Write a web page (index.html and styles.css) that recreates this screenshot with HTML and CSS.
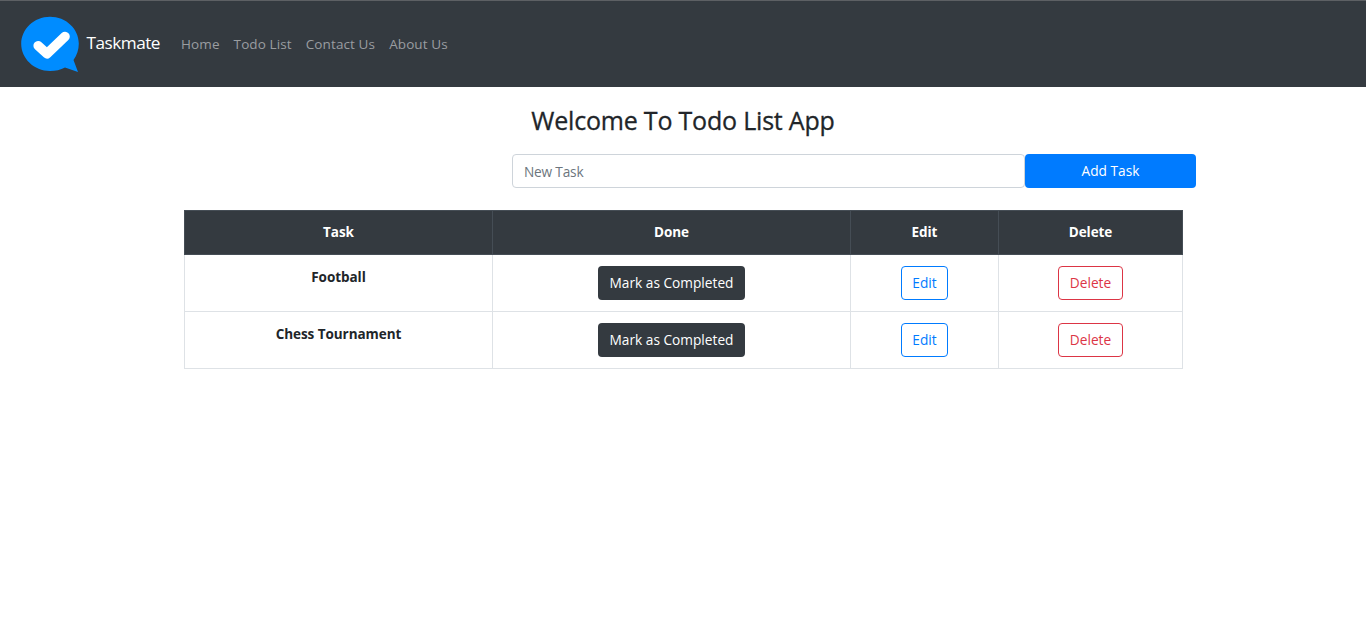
FILE: index.html
```html
<!DOCTYPE html>
<html lang="en">
<head>
<meta charset="utf-8">
<title>Taskmate</title>
<link rel="stylesheet" href="styles.css">
</head>
<body>
<nav class="navbar">
  <a class="brand" href="#">
    <svg class="logo" width="60" height="58" viewBox="0 0 60 58" aria-hidden="true">
      <path fill="#008cff" d="M30 1.700C46 1.700 58.800 13.800 58.800 28.500C58.800 34.500 57 40 53.500 45L58 57L45 52.500C40.500 55 35.500 56 30 56C14 56 1.200 43.500 1.200 28.800S14 1.700 30 1.700Z"/>
      <path fill="none" stroke="#fff" stroke-width="9.600" stroke-linecap="round" stroke-linejoin="round" d="M18.200 30.800L27 38.700L45 21.600"/>
    </svg>
    <span class="brand-name">Taskmate</span>
  </a>
  <div class="links">
    <a href="#">Home</a>
    <a href="#">Todo List</a>
    <a href="#">Contact Us</a>
    <a href="#">About Us</a>
  </div>
</nav>
<main>
  <h1 class="title">Welcome To Todo List App</h1>
  <form class="task-form">
    <input class="task-input" type="text" placeholder="New Task">
    <button class="btn btn-add" type="button">Add Task</button>
  </form>
  <table class="tasks">
    <colgroup><col class="col-task"><col class="col-done"><col class="col-edit"><col class="col-delete"></colgroup>
    <thead>
      <tr><th>Task</th><th>Done</th><th>Edit</th><th>Delete</th></tr>
    </thead>
    <tbody>
      <tr>
        <th>Football</th>
        <td><button class="btn btn-done" type="button">Mark as Completed</button></td>
        <td><button class="btn btn-edit" type="button">Edit</button></td>
        <td><button class="btn btn-delete" type="button">Delete</button></td>
      </tr>
      <tr>
        <th>Chess Tournament</th>
        <td><button class="btn btn-done" type="button">Mark as Completed</button></td>
        <td><button class="btn btn-edit" type="button">Edit</button></td>
        <td><button class="btn btn-delete" type="button">Delete</button></td>
      </tr>
    </tbody>
  </table>
</main>
</body>
</html>
```
FILE: styles.css
```css
* { box-sizing: border-box; }
body {
  margin: 0;
  background: #fff;
  color: #212529;
  font: 13.700px/22px "Segoe UI", "Open Sans", sans-serif;
}
a { text-decoration: none; }
.navbar {
  display: flex;
  align-items: center;
  height: 87px;
  padding: 0 20px;
  border-top: 1px solid #5d6064;
  background: #343a40;
}
.brand { display: flex; align-items: center; width: 161px; color: #fff; }
.logo { flex: none; margin-top: -1px; }
.brand-name { margin: -4px 0 0 6.500px; font-size: 17.200px; letter-spacing: -0.500px; line-height: 27px; }
.links { display: flex; gap: 14px; }
.links a { color: #9a9da0; font-size: 13.500px; letter-spacing: 0.110px; white-space: nowrap; }
.title {
  margin: 17px 0 0;
  font-size: 25px;
  font-weight: 500;
  letter-spacing: -0.200px;
  line-height: 32px;
  text-align: center;
  -webkit-text-stroke: 0.300px #212529;
}
.task-form { display: flex; width: 684px; margin: 18px 0 0 512px; }
.task-input {
  width: 513px;
  height: 34px;
  padding: 1px 11px 0;
  border: 1px solid #ced4da;
  border-radius: 4px;
  background: #fff;
  color: #495057;
  font: inherit;
  letter-spacing: -0.200px;
}
.task-input::placeholder { color: #6c757d; opacity: 1; }
.btn {
  height: 34px;
  padding: 0;
  border: 1px solid transparent;
  border-radius: 4px;
  font: inherit;
  line-height: 32px;
  white-space: nowrap;
}
.btn-add { width: 171px; background: #007bff; color: #fff; }
.btn-done { width: 147px; background: #343a40; color: #fff; }
.btn-edit { width: 47px; border-color: #007bff; background: #fff; color: #007bff; }
.btn-delete { width: 65px; border-color: #dc3545; background: #fff; color: #dc3545; }
.tasks {
  width: 999px;
  margin: 22px 0 0 184px;
  border-collapse: collapse;
  table-layout: fixed;
  text-align: center;
}
.col-task { width: 308px; }
.col-done { width: 358px; }
.col-edit { width: 148px; }
.col-delete { width: 184px; }
.tasks th, .tasks td {
  padding: 11px;
  border: 1px solid #dee2e6;
  vertical-align: top;
}
.tasks th { font-size: 13.500px; letter-spacing: -0.050px; }
.tasks td { line-height: 0; }
.tasks thead th { border-color: #454d55; background: #343a40; color: #fff; line-height: 21px; }
```
